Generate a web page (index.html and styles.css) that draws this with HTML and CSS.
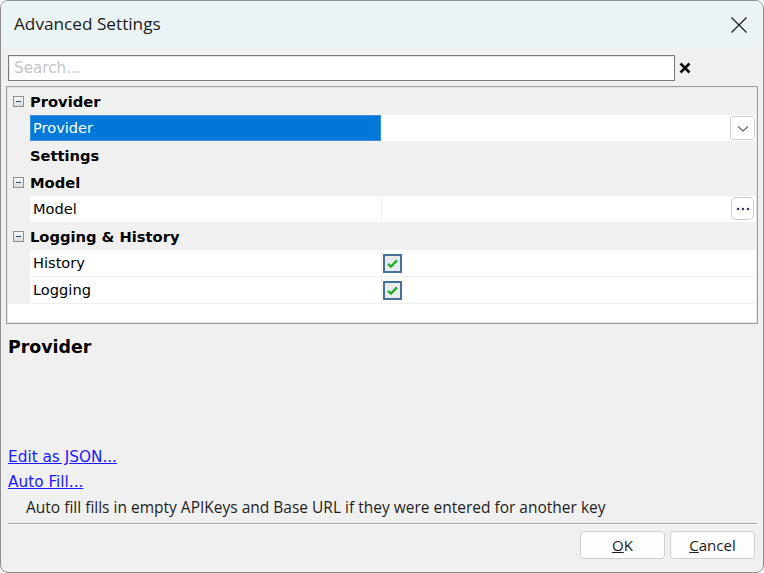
FILE: index.html
```html
<!DOCTYPE html>
<html lang="en">
<head>
<meta charset="utf-8">
<title>Advanced Settings</title>
<link rel="stylesheet" href="styles.css">
</head>
<body>
<div class="window">
  <header class="titlebar">
    <span class="title">Advanced Settings</span>
    <span class="close" aria-label="Close">
      <svg width="16" height="16" viewBox="0 0 16 16"><path d="M0.5 0.5L15.5 15.5M15.5 0.5L0.5 15.5" stroke="#1a1a1a" stroke-width="1.2" fill="none"/></svg>
    </span>
  </header>

  <main class="content">
    <div class="search-row">
      <input class="search" type="text" placeholder="Search...">
      <span class="clear">
        <svg width="12" height="12" viewBox="0 0 12 12"><path d="M1.5 1.5L10.5 10.5M10.5 1.5L1.5 10.5" stroke="#111" stroke-width="2.6" fill="none"/></svg>
      </span>
    </div>

    <div class="grid">
      <div class="row category">
        <span class="gutter"><span class="toggle"></span></span>
        <span class="cat-label">Provider</span>
      </div>
      <div class="row item">
        <span class="gutter"></span>
        <span class="label selected">Provider</span>
        <span class="value">
          <span class="btn-drop">
            <svg width="12" height="8" viewBox="0 0 12 8"><path d="M1 1.5L6 6L11 1.5" stroke="#6b6b6b" stroke-width="1.3" fill="none"/></svg>
          </span>
        </span>
      </div>
      <div class="row category">
        <span class="gutter"></span>
        <span class="cat-label">Settings</span>
      </div>
      <div class="row category">
        <span class="gutter"><span class="toggle"></span></span>
        <span class="cat-label">Model</span>
      </div>
      <div class="row item">
        <span class="gutter"></span>
        <span class="label">Model</span>
        <span class="value">
          <span class="btn-ellipsis">
            <svg width="14" height="4" viewBox="0 0 14 4"><circle cx="2" cy="2" r="1.3" fill="#3a3a6a"/><circle cx="7" cy="2" r="1.3" fill="#3a3a6a"/><circle cx="12" cy="2" r="1.3" fill="#3a3a6a"/></svg>
          </span>
        </span>
      </div>
      <div class="row category">
        <span class="gutter"><span class="toggle"></span></span>
        <span class="cat-label">Logging &amp; History</span>
      </div>
      <div class="row item">
        <span class="gutter"></span>
        <span class="label">History</span>
        <span class="value"><span class="check">
          <svg width="19" height="19" viewBox="0 0 19 19"><rect x="1" y="1" width="17" height="17" fill="#e9ebec" stroke="#45709c" stroke-width="2"/><path d="M5 9.8L8 12.6L14 6.4" stroke="#22ad32" stroke-width="2.4" fill="none"/></svg>
        </span></span>
      </div>
      <div class="row item">
        <span class="gutter"></span>
        <span class="label">Logging</span>
        <span class="value"><span class="check">
          <svg width="19" height="19" viewBox="0 0 19 19"><rect x="1" y="1" width="17" height="17" fill="#e9ebec" stroke="#45709c" stroke-width="2"/><path d="M5 9.8L8 12.6L14 6.4" stroke="#22ad32" stroke-width="2.4" fill="none"/></svg>
        </span></span>
      </div>
      <div class="grid-fill"></div>
    </div>

    <section class="help">
      <h2 class="help-title">Provider</h2>
    </section>

    <div class="links">
      <a href="#" class="link">Edit as JSON...</a>
      <a href="#" class="link">Auto Fill...</a>
      <p class="note">Auto fill fills in empty APIKeys and Base URL if they were entered for another key</p>
    </div>

    <div class="separator"></div>

    <div class="buttons">
      <button class="btn"><u>O</u>K</button>
      <button class="btn"><u>C</u>ancel</button>
    </div>
  </main>
</div>
</body>
</html>
```

FILE: styles.css
```css
html, body {
  margin: 0;
  padding: 0;
  background: #ffffff;
}

.window {
  width: 764px;
  height: 573px;
  box-sizing: border-box;
  border: 1px solid #8f8f8f;
  border-radius: 8px;
  overflow: hidden;
  display: flex;
  flex-direction: column;
  background: #f0f0f0;
}

/* ---- title bar ---- */
.titlebar {
  height: 46px;
  flex: none;
  background: #eaf3f6;
  display: flex;
  align-items: center;
  justify-content: space-between;
  padding: 0 16px 0 13px;
  font-family: "Open Sans", "Noto Sans", sans-serif;
}
.title {
  font-size: 17.2px;
  color: #1b1b1b;
  margin-top: -1px;
}
.close {
  display: flex;
  margin-top: 1px;
}

/* ---- dialog body ---- */
.content {
  flex: 1;
  display: flex;
  flex-direction: column;
  padding: 8px 4px 13px 5px;
  font-family: "DejaVu Sans", sans-serif;
  color: #000;
}

.search-row {
  display: flex;
  align-items: center;
  padding-left: 2px;
  height: 26px;
}
.search {
  width: 667px;
  height: 26px;
  box-sizing: border-box;
  border: 1px solid #7a7a7a;
  box-shadow: inset 1px 1px 0 #e8e8e8;
  background: #fff;
  padding: 0 5px;
  font-family: "DejaVu Sans", sans-serif;
  font-size: 15.2px;
  outline: none;
}
.search::placeholder {
  color: #c4c4c4;
}
.clear {
  display: flex;
  margin-left: 4px;
  margin-top: -1px;
}

/* ---- property grid ---- */
.grid {
  margin-top: 5px;
  width: 752px;
  height: 238px;
  box-sizing: border-box;
  border: 1px solid #a0a0a0;
  box-shadow: inset 1px 1px 0 #e4e4e4, inset -1px -1px 0 #e4e4e4;
  padding: 1px 1px;
  background: #f0f0f0;
  display: flex;
  flex-direction: column;
}
.row {
  height: 27px;
  flex: none;
  display: flex;
  box-sizing: border-box;
}
.gutter {
  width: 22px;
  flex: none;
  display: flex;
  align-items: center;
  justify-content: center;
  padding-right: 2px;
  box-sizing: border-box;
}
.toggle {
  width: 9px;
  height: 9px;
  border: 1px solid #8e8f8f;
  background: linear-gradient(#f7f7f7, #dcdcdc);
  position: relative;
}
.toggle::after {
  content: "";
  position: absolute;
  left: 2px;
  right: 2px;
  top: 4px;
  height: 1px;
  background: #2b4a78;
}
.cat-label {
  font-weight: bold;
  font-size: 14.7px;
  line-height: 27px;
}
.item {
  border-bottom: 1px solid #f0f0f0;
}
.label {
  width: 352px;
  flex: none;
  background: #fff;
  font-size: 14.6px;
  line-height: 26px;
  padding-left: 3px;
  box-sizing: border-box;
  border-right: 1px solid #f0f0f0;
}
.label.selected {
  background: #0078d7;
  color: #fff;
  box-shadow: inset 0 0 0 1px #3a92dc;
}
.value {
  flex: 1;
  background: #fff;
  display: flex;
  align-items: center;
  padding-left: 1px;
  position: relative;
}
.btn-drop {
  position: absolute;
  right: 1px;
  top: 1px;
  width: 25px;
  height: 24px;
  box-sizing: border-box;
  border: 1px solid #cfcfcf;
  border-radius: 3px;
  background: #fff;
  display: flex;
  align-items: center;
  justify-content: center;
  padding-top: 2px;
}
.btn-ellipsis {
  position: absolute;
  right: 2px;
  top: 1px;
  width: 23px;
  height: 23px;
  box-sizing: border-box;
  border: 1px solid #cdcdcd;
  border-radius: 5px;
  background: #fff;
  display: flex;
  align-items: center;
  justify-content: center;
  padding-top: 1px;
}
.check {
  display: flex;
  margin-top: 1px;
}
.grid-fill {
  flex: 1;
  background: #fff;
}

/* ---- help area ---- */
.help {
  flex: 1;
  padding-left: 2px;
}
.help-title {
  margin: 13px 0 0;
  font-size: 17.4px;
  font-weight: bold;
  line-height: 20px;
}

.links {
  display: flex;
  flex-direction: column;
  align-items: flex-start;
  padding-left: 2px;
}
.link {
  color: #1a1aff;
  font-size: 15.3px;
  line-height: 25px;
}
.note {
  margin: 0;
  padding-left: 18px;
  font-family: "Open Sans", "Noto Sans", sans-serif;
  font-size: 15.5px;
  line-height: 24px;
  color: #1e1e1e;
}

.separator {
  margin: 4px 0 0 2px;
  height: 1px;
  width: 749px;
  background: #a0a0a0;
  box-shadow: 0 1px 0 #fff;
}

.buttons {
  margin-top: 7px;
  display: flex;
  justify-content: flex-end;
  gap: 5px;
  padding-right: 4px;
}
.btn {
  width: 85px;
  height: 28px;
  border: 1px solid #d0d0d0;
  border-radius: 4px;
  background: #fdfdfd;
  font-family: "Open Sans", "Noto Sans", sans-serif;
  font-size: 15px;
  color: #1b1b1b;
  padding: 0;
}
```
